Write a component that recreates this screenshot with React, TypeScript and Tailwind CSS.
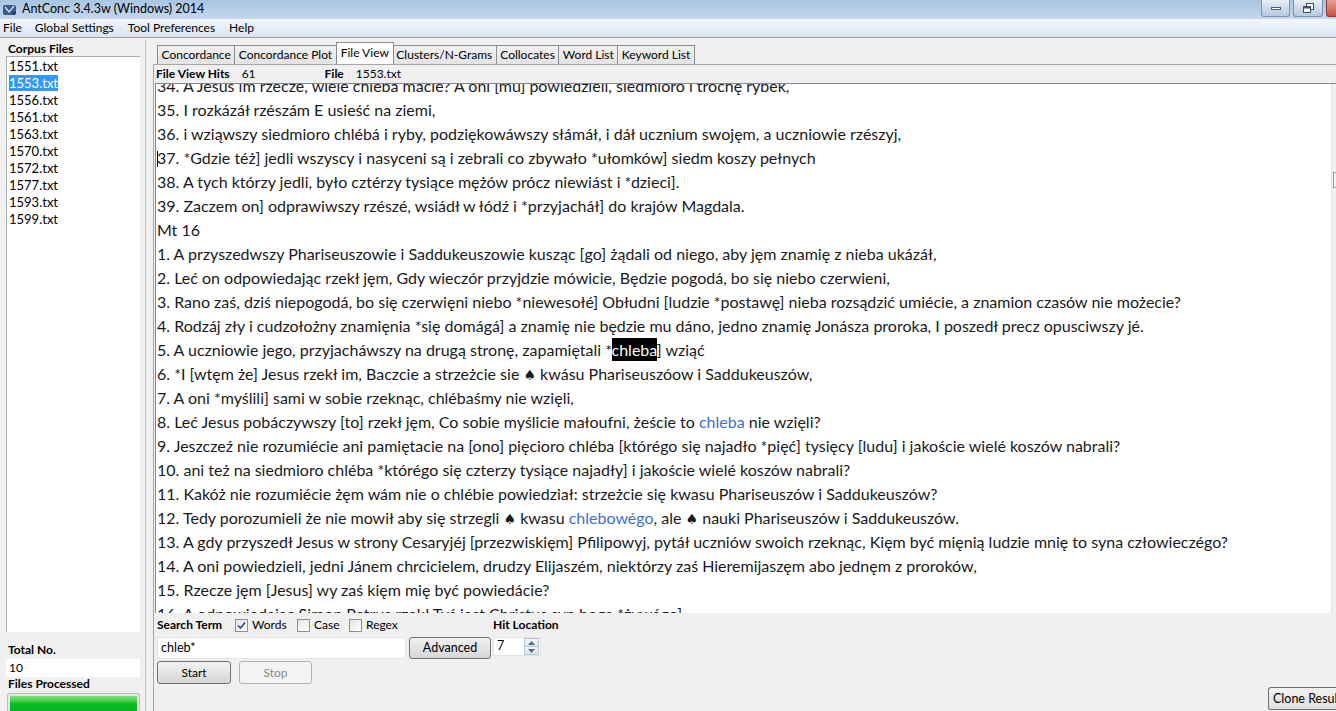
import React from "react";

type Seg = string | { t: string; k: "hit" | "blue" | "spade" };

const files = [
  "1551.txt",
  "1553.txt",
  "1556.txt",
  "1561.txt",
  "1563.txt",
  "1570.txt",
  "1572.txt",
  "1577.txt",
  "1593.txt",
  "1599.txt",
];

const tabs = [
  "Concordance",
  "Concordance Plot",
  "File View",
  "Clusters/N-Grams",
  "Collocates",
  "Word List",
  "Keyword List",
];

const spade: Seg = { t: "♠", k: "spade" };

const lines: Seg[][] = [
  ["34. A Jesus im rzecze, wiele chleba macie? A oni [mu] powiedzieli, siedmioro i trochę rybek,"],
  ["35. I rozkázáł rzészám E usieść na ziemi,"],
  ["36. i wziąwszy siedmioro chlébá i ryby, podziękowáwszy słámáł, i dáł ucznium swojęm, a uczniowie rzészyj,"],
  ["37. *Gdzie téż] jedli wszyscy i nasyceni są i zebrali co zbywało *ułomków] siedm koszy pełnych"],
  ["38. A tych którzy jedli, było cztérzy tysiące mężów prócz niewiást i *dzieci]."],
  ["39. Zaczem on] odprawiwszy rzészé, wsiádł w łódź i *przyjacháł] do krajów Magdala."],
  ["Mt 16"],
  ["1. A przyszedwszy Phariseuszowie i Saddukeuszowie kusząc [go] żądali od niego, aby jęm znamię z nieba ukázáł,"],
  ["2. Leć on odpowiedając rzekł jęm, Gdy wieczór przyjdzie mówicie, Będzie pogodá, bo się niebo czerwieni,"],
  ["3. Rano zaś, dziś niepogodá, bo się czerwięni niebo *niewesołé] Obłudni [ludzie *postawę] nieba rozsądzić umiécie, a znamion czasów nie możecie?"],
  ["4. Rodzáj zły i cudzołożny znamięnia *się domágá] a znamię nie będzie mu dáno, jedno znamię Jonásza proroka, I poszedł precz opusciwszy jé."],
  ["5. A uczniowie jego, przyjacháwszy na drugą stronę, zapamiętali *", { t: "chleba", k: "hit" }, "] wziąć"],
  ["6. *I [wtęm że] Jesus rzekł im, Baczcie a strzeżcie sie ", spade, " kwásu Phariseuszóow i Saddukeuszów,"],
  ["7. A oni *myślili] sami w sobie rzeknąc, chlébaśmy nie wzięli,"],
  ["8. Leć Jesus pobáczywszy [to] rzekł jęm, Co sobie myślicie małoufni, żeście to ", { t: "chleba", k: "blue" }, " nie wzięli?"],
  ["9. Jeszczeź nie rozumiécie ani pamiętacie na [ono] pięcioro chléba [którégo się najadło *pięć] tysięcy [ludu] i jakoście wielé koszów nabrali?"],
  ["10. ani też na siedmioro chléba *którégo się czterzy tysiące najadły] i jakoście wielé koszów nabrali?"],
  ["11. Kakóż nie rozumiécie żęm wám nie o chlébie powiedział: strzeżcie się kwasu Phariseuszów i Saddukeuszów?"],
  ["12. Tedy porozumieli że nie mowił aby się strzegli ", spade, " kwasu ", { t: "chlebowégo", k: "blue" }, ", ale ", spade, " nauki Phariseuszów i Saddukeuszów."],
  ["13. A gdy przyszedł Jesus w strony Cesaryjéj [przezwiskięm] Pfilipowyj, pytáł uczniów swoich rzeknąc, Kięm być mięnią ludzie mnię to syna człowieczégo?"],
  ["14. A oni powiedzieli, jedni Jánem chrcicielem, drudzy Elijaszém, niektórzy zaś Hieremijaszęm abo jednęm z proroków,"],
  ["15. Rzecze jęm [Jesus] wy zaś kięm mię być powiedácie?"],
  ["16. A odpowiedając Simon Petrus rzekł Tyś jest Christus syn boga *żywégo]"],
];

function TitleBar() {
  return (
    <div className="h-[19px] flex items-center bg-gradient-to-b from-[#a9c5e2] to-[#c4d8ee] relative">
      <svg width="16" height="14" viewBox="0 0 16 14" className="ml-[2px]">
        <rect x="1" y="2" width="13" height="10" rx="2" fill="#3a5a8c" />
        <path d="M3 4 L7 9 L12 3" stroke="#cfe0f5" strokeWidth="1.4" fill="none" />
        <circle cx="12" cy="10" r="1.5" fill="#1d2f52" />
      </svg>
      <span className="ml-[4px] text-[12.5px] text-black leading-none">AntConc 3.4.3w (Windows) 2014</span>
      <div className="absolute right-0 top-0 flex gap-[3px]">
        <div className="w-[29px] h-[17px] rounded-b-[3px] border border-t-0 border-[#7b92b3] bg-gradient-to-b from-[#e7eef7] to-[#b7c9e0] flex items-center justify-center">
          <div className="w-[10px] h-[3px] border border-[#4a5a74] bg-white" />
        </div>
        <div className="w-[30px] h-[17px] rounded-b-[3px] border border-t-0 border-[#7b92b3] bg-gradient-to-b from-[#e7eef7] to-[#b7c9e0] flex items-center justify-center">
          <svg width="11" height="10" viewBox="0 0 11 10">
            <rect x="3.5" y="0.5" width="7" height="6" fill="#fff" stroke="#3f4f69" />
            <rect x="0.5" y="3.5" width="7" height="6" fill="#fff" stroke="#3f4f69" />
            <rect x="1" y="4" width="6" height="1.5" fill="#3f4f69" />
          </svg>
        </div>
        <div className="w-[10px] h-[17px] rounded-bl-[3px] border border-t-0 border-r-0 border-[#8b3a32] bg-gradient-to-b from-[#e8a192] to-[#c7503d]" />
      </div>
    </div>
  );
}

function MenuBar() {
  return (
    <div className="h-[19px] flex items-center bg-gradient-to-b from-[#f2f6fb] to-[#dae4f2] border-b border-[#a0a0a0] text-[12px]">
      <span className="ml-[3px]">File</span>
      <span className="ml-[13px]">Global Settings</span>
      <span className="ml-[14px]">Tool Preferences</span>
      <span className="ml-[14px]">Help</span>
    </div>
  );
}

function LeftPanel() {
  return (
    <div className="w-[146px] shrink-0 flex flex-col border-r border-[#c4c4c4]">
      <div className="pl-[8px] pt-[2px] h-[16px] shrink-0 font-bold text-[12px] leading-[14px]">Corpus Files</div>
      <div className="ml-[6px] w-[134px] flex-1 min-h-0 bg-white border-t border-l border-[#abadb3] pt-[1px] pl-[2px]">
        {files.map((f, i) => (
          <div key={f} className="h-[17px] leading-[17px] text-[13px]">
            <span className={i === 1 ? "bg-[#3399ff] text-white" : ""}>{f}</span>
          </div>
        ))}
      </div>
      <div className="pl-[8px] mt-[11px] h-[14px] shrink-0 font-bold text-[12px] leading-[14px]">Total No.</div>
      <div className="ml-[6px] w-[134px] h-[18px] shrink-0 bg-white mt-[2px] pl-[3px] text-[12px] leading-[18px]">10</div>
      <div className="pl-[8px] h-[14px] shrink-0 font-bold text-[12px] leading-[14px]">Files Processed</div>
      <div className="ml-[7px] w-[133px] h-[18px] shrink-0 mt-[2px] rounded-t-[3px] border border-b-0 border-[#bcbcbc] bg-[#e6e6e6] p-[2px] pb-0">
        <div className="h-full bg-gradient-to-b from-[#7ee07a] via-[#06c21e] to-[#06b025]" />
      </div>
    </div>
  );
}

function Checkbox({ checked, label, w }: { checked?: boolean; label: string; w: string }) {
  return (
    <div className={`flex items-center gap-[4px] ${w}`}>
      <div className="w-[13px] h-[13px] shrink-0 border border-[#8f8f8f] bg-gradient-to-br from-[#e4e4e4] to-[#ffffff] flex items-center justify-center">
        {checked && (
          <svg width="9" height="9" viewBox="0 0 9 9">
            <path d="M1 4.5 L3.5 7 L8 1.5" stroke="#2a3f8f" strokeWidth="1.6" fill="none" />
          </svg>
        )}
      </div>
      <span>{label}</span>
    </div>
  );
}

function renderSeg(s: Seg, i: number) {
  if (typeof s === "string") return <span key={i}>{s}</span>;
  if (s.k === "hit")
    return (
      <span key={i} className="bg-black text-white py-[2px]">
        {s.t}
      </span>
    );
  if (s.k === "blue")
    return (
      <span key={i} className="text-[#3e6fd0]">
        {s.t}
      </span>
    );
  return (
    <span key={i} className="text-[14px] font-['DejaVu_Sans',sans-serif]">
      {s.t}
    </span>
  );
}

function FileView() {
  return (
    <div className="flex-1 min-h-0 flex border-t border-l border-[#828790] bg-white">
      <div className="flex-1 overflow-hidden">
        <div className="mt-[-10px] pl-[1px] text-[16px] text-[#1a1a1a]">
          {lines.map((l, i) => (
            <div key={i} className="h-[24px] leading-[24px] whitespace-nowrap relative">
              {i === 3 && <span className="absolute left-[0px] top-[5px] w-px h-[16px] bg-black" />}
              {l.map(renderSeg)}
            </div>
          ))}
        </div>
      </div>
      <div className="w-[5px] bg-[#f0f0f0] border-l border-[#e2e2e2] relative">
        <div className="absolute top-[88px] left-[1px] w-[4px] h-[16px] border border-r-0 border-[#9a9a9a] bg-[#f4f4f4]" />
      </div>
    </div>
  );
}

function SearchArea() {
  return (
    <div className="h-[98px] shrink-0 flex relative text-[12px]">
      <div className="pl-[2px] pt-[4px] flex flex-col">
        <div className="flex items-center h-[16px]">
          <span className="font-bold w-[78px]">Search Term</span>
          <Checkbox checked label="Words" w="w-[62px]" />
          <Checkbox label="Case" w="w-[52px]" />
          <Checkbox label="Regex" w="w-[60px]" />
        </div>
        <div className="flex items-center mt-[4px] gap-[3px]">
          <div className="w-[249px] h-[22px] bg-white border border-[#e3e3e3] pl-[3px] text-[12.5px] leading-[20px]">chleb*</div>
          <div className="w-[82px] h-[22px] rounded-[3px] border border-[#707070] bg-gradient-to-b from-[#f2f2f2] to-[#d6d6d6] flex items-center justify-center text-[12.5px]">
            Advanced
          </div>
        </div>
        <div className="flex items-center mt-[2px] gap-[8px]">
          <div className="w-[74px] h-[23px] rounded-[3px] border border-[#707070] bg-gradient-to-b from-[#f2f2f2] to-[#d6d6d6] flex items-center justify-center">
            Start
          </div>
          <div className="w-[73px] h-[23px] rounded-[3px] border border-[#adb2b5] bg-[#f4f4f4] flex items-center justify-center text-[#8a8a8a]">
            Stop
          </div>
        </div>
      </div>
      <div className="ml-[2px] pt-[4px] flex flex-col">
        <div className="font-bold h-[16px] leading-[16px]">Hit Location</div>
        <div className="mt-[4px] w-[48px] h-[19px] bg-white border border-[#e3e3e3] flex items-center justify-between">
          <span className="pl-[3px] text-[12.5px]">7</span>
          <div className="flex flex-col w-[15px] h-[17px] mr-[1px]">
            <div className="flex-1 border border-[#b9c6d6] bg-gradient-to-b from-[#f3f6fa] to-[#dbe4ee] flex items-center justify-center">
              <svg width="7" height="4" viewBox="0 0 7 4"><path d="M0 4 L3.5 0 L7 4Z" fill="#4f6d93" /></svg>
            </div>
            <div className="flex-1 border border-t-0 border-[#b9c6d6] bg-gradient-to-b from-[#f3f6fa] to-[#dbe4ee] flex items-center justify-center">
              <svg width="7" height="4" viewBox="0 0 7 4"><path d="M0 0 L3.5 4 L7 0Z" fill="#4f6d93" /></svg>
            </div>
          </div>
        </div>
      </div>
      <div className="absolute right-0 bottom-[1px] w-[68px] h-[23px] rounded-l-[3px] border border-r-0 border-[#707070] bg-gradient-to-b from-[#f2f2f2] to-[#e0e0e0] pl-[4px] text-[12.5px] leading-[21px] overflow-hidden whitespace-nowrap">
        Clone Results
      </div>
    </div>
  );
}

function MainPanel() {
  return (
    <div className="flex-1 min-w-0 flex flex-col pl-[7px]">
      <div className="h-[24px] flex items-end pl-[4px] shrink-0">
        {tabs.map((t) =>
          t === "File View" ? (
            <div key={t} className="h-[22px] px-[4px] bg-white border border-b-0 border-[#898c95] -mx-px relative z-10 text-[12px] leading-[20px]">
              {t}
            </div>
          ) : (
            <div key={t} className="h-[19px] px-[3.5px] bg-gradient-to-b from-[#f2f2f2] to-[#e3e3e3] border border-b-0 border-l-0 first:border-l border-[#898c95] text-[12px] leading-[18px]">
              {t}
            </div>
          )
        )}
      </div>
      <div className="flex-1 min-h-0 flex flex-col border-l border-t border-[#a7a7a7] pl-[1px]">
        <div className="h-[18px] shrink-0 flex items-center text-[12px]">
          <span className="font-bold ml-[1px]">File View Hits</span>
          <span className="ml-[12px]">61</span>
          <span className="font-bold ml-[69px]">File</span>
          <span className="ml-[12px]">1553.txt</span>
        </div>
        <FileView />
        <SearchArea />
      </div>
    </div>
  );
}

export default function App() {
  return (
    <div className="w-[1336px] h-[711px] overflow-hidden bg-[#f0f0f0] flex flex-col font-['Lato',sans-serif] text-black">
      <TitleBar />
      <MenuBar />
      <div className="flex-1 min-h-0 flex pt-[2px]">
        <LeftPanel />
        <MainPanel />
      </div>
    </div>
  );
}
